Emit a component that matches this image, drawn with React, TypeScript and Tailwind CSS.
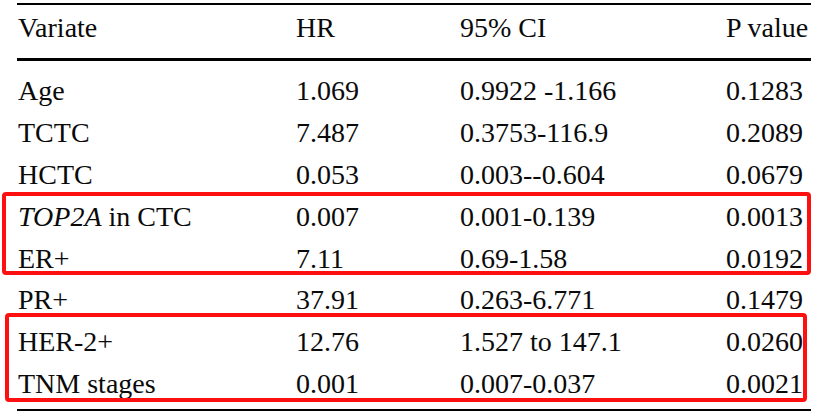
import React from "react";

type Row = { name: React.ReactNode; hr: string; ci: string; p: string };

const rows: Row[] = [
  { name: "Age", hr: "1.069", ci: "0.9922 -1.166", p: "0.1283" },
  { name: "TCTC", hr: "7.487", ci: "0.3753-116.9", p: "0.2089" },
  { name: "HCTC", hr: "0.053", ci: "0.003--0.604", p: "0.0679" },
  {
    name: (
      <>
        <i>TOP2A</i> in CTC
      </>
    ),
    hr: "0.007",
    ci: "0.001-0.139",
    p: "0.0013",
  },
  { name: "ER+", hr: "7.11", ci: "0.69-1.58", p: "0.0192" },
  { name: "PR+", hr: "37.91", ci: "0.263-6.771", p: "0.1479" },
  { name: "HER-2+", hr: "12.76", ci: "1.527 to 147.1", p: "0.0260" },
  { name: "TNM stages", hr: "0.001", ci: "0.007-0.037", p: "0.0021" },
];

const TableRow = ({ row }: { row: Row }) => (
  <div className="grid h-[41.9px] grid-cols-[279px_164px_266px_1fr] whitespace-nowrap leading-[42px]">
    <div className="pl-px">{row.name}</div>
    <div>{row.hr}</div>
    <div>{row.ci}</div>
    <div>{row.p}</div>
  </div>
);

export default function App() {
  return (
    <div className="h-[417px] w-[814px] overflow-hidden bg-white font-['Liberation_Serif','Times_New_Roman',serif] text-[28px] text-[#0a0a0a]">
      <div className="ml-[17px] w-[794px] pt-[3px]">
        <div className="h-[2px] bg-black" />
        <div className="grid h-[53px] grid-cols-[279px_164px_266px_1fr] whitespace-nowrap pt-[2px] leading-[42px]">
          <div className="pl-px">Variate</div>
          <div>HR</div>
          <div>95% CI</div>
          <div>P value</div>
        </div>
        <div className="h-[3px] bg-black" />
        <div className="mt-[9px]">
          {rows.slice(0, 3).map((r, i) => (
            <TableRow key={i} row={r} />
          ))}
          <div className="relative">
            <div className="pointer-events-none absolute -top-[4px] bottom-[4px] -left-[15px] right-0 rounded-[4px] border-[4px] border-[#ff1010]" />
            {rows.slice(3, 5).map((r, i) => (
              <TableRow key={i} row={r} />
            ))}
          </div>
          <TableRow row={rows[5]} />
          <div className="relative">
            <div className="pointer-events-none absolute -top-[8px] bottom-[3px] -left-[12px] right-[4px] rounded-[4px] border-[4px] border-[#ff1010]" />
            {rows.slice(6, 8).map((r, i) => (
              <TableRow key={i} row={r} />
            ))}
          </div>
        </div>
        <div className="mt-[4px] h-[2px] bg-black" />
      </div>
    </div>
  );
}
